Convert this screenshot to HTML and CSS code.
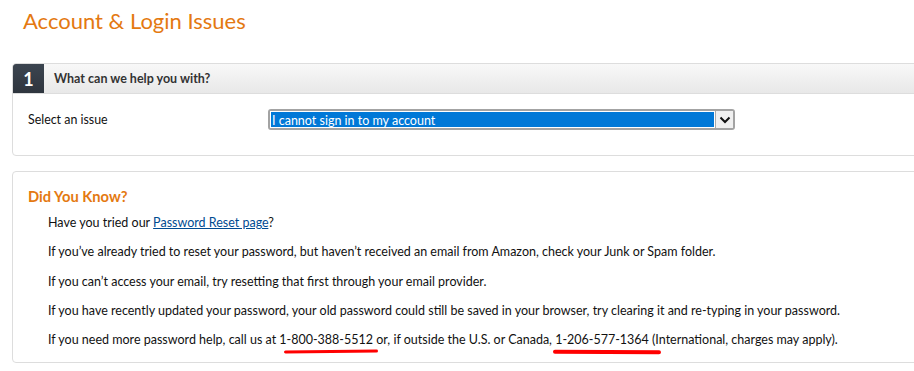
FILE: index.html
```html
<!DOCTYPE html>
<html lang="en">
<head>
<meta charset="utf-8">
<title>Account &amp; Login Issues</title>
<link rel="stylesheet" href="styles.css">
</head>
<body>
<div class="page">
  <h1 class="title">Account &amp; Login Issues</h1>

  <section class="box step-box">
    <div class="step-head">
      <div class="step-num">1</div>
      <div class="step-title">What can we help you with?</div>
    </div>
    <div class="step-body">
      <div class="issue-label">Select an issue</div>
      <div class="select">
        <span class="select-value">I cannot sign in to my account</span>
        <span class="select-arrow">
          <svg width="12" height="8" viewBox="0 0 12 8"><path d="M1.5 1.5 L6 6 L10.5 1.5" fill="none" stroke="#111" stroke-width="2"/></svg>
        </span>
      </div>
    </div>
  </section>

  <section class="box know-box">
    <h2 class="know-title">Did You Know?</h2>
    <p>Have you tried our <a href="#" class="link">Password Reset page</a>?</p>
    <p>If you’ve already tried to reset your password, but haven’t received an email from Amazon, check your Junk or Spam folder.</p>
    <p>If you can’t access your email, try resetting that first through your email provider.</p>
    <p>If you have recently updated your password, your old password could still be saved in your browser, try clearing it and re-typing in your password.</p>
    <p>If you need more password help, call us at <span class="phone phone-us">1-800-388-5512</span> or, if outside the U.S. or Canada, <span class="phone phone-intl">1-206-577-1364</span> (International, charges may apply).</p>
  </section>
</div>
</body>
</html>
```

FILE: styles.css
```css
html, body {
  margin: 0;
  padding: 0;
  overflow: hidden;
  background: #fff;
}

body {
  font-family: Lato, "Liberation Sans", Arial, sans-serif;
  color: #111;
  font-size: 12.5px;
}

.page {
  width: 930px;
  padding: 0 0 0 12px;
}

.title {
  margin: 0;
  padding: 7px 0 0 11px;
  height: 63px;
  box-sizing: border-box;
  font-size: 22px;
  font-weight: 400;
  line-height: 28px;
  color: #e47911;
}

.box {
  border: 1px solid #ddd;
  border-radius: 4px;
  background: #fff;
}

.step-head {
  display: flex;
  height: 29px;
  border-bottom: 1px solid #ddd;
  background: linear-gradient(to bottom, #f8f8f8, #e8e8e8);
}

.step-num {
  width: 31px;
  display: flex;
  align-items: center;
  justify-content: center;
  background: linear-gradient(to bottom, #3c4550, #2e353e);
  color: #fff;
  font-size: 18px;
  font-weight: 700;
  border-top-left-radius: 3px;
}

.step-title {
  display: flex;
  align-items: center;
  padding-left: 10px;
  font-size: 12.5px;
  font-weight: 700;
  color: #333;
}

.step-body {
  display: flex;
  align-items: center;
  padding: 15px 0 25px 15px;
}

.issue-label {
  width: 240px;
  font-size: 12.4px;
  color: #111;
}

.select {
  display: flex;
  width: 467px;
  height: 21px;
  box-sizing: border-box;
  border: 2px solid #a3a3a3;
  border-radius: 3px;
  background: #fff;
}

.select-value {
  flex: 1;
  background: #0078d7;
  color: #fff;
  line-height: 17px;
  padding-left: 1px;
  border: 1px solid #fff;
}

.select-arrow {
  width: 17px;
  display: flex;
  align-items: center;
  justify-content: center;
  background: #f0f0f0;
  border-left: 1px solid #aaa;
}

.know-box {
  margin-top: 15px;
  padding: 14px 0 3px 15px;
}

.know-title {
  margin: 0 0 7px 0;
  font-size: 14.7px;
  line-height: 20px;
  font-weight: 700;
  color: #e47911;
}

.know-box p {
  margin: 0 0 10.3px 20px;
  line-height: 19px;
}

.link {
  color: #004b91;
  text-decoration: underline;
}

.phone {
  position: relative;
}

.phone::after {
  content: "";
  position: absolute;
  height: 3px;
  background: #f00;
  border-radius: 2px;
}

.phone-us::after {
  left: 5px;
  right: -5px;
  bottom: -6px;
  transform: rotate(-0.6deg);
}

.phone-intl::after {
  left: -2px;
  right: -12px;
  bottom: -7px;
  height: 4px;
  transform: rotate(0.3deg);
}
```
